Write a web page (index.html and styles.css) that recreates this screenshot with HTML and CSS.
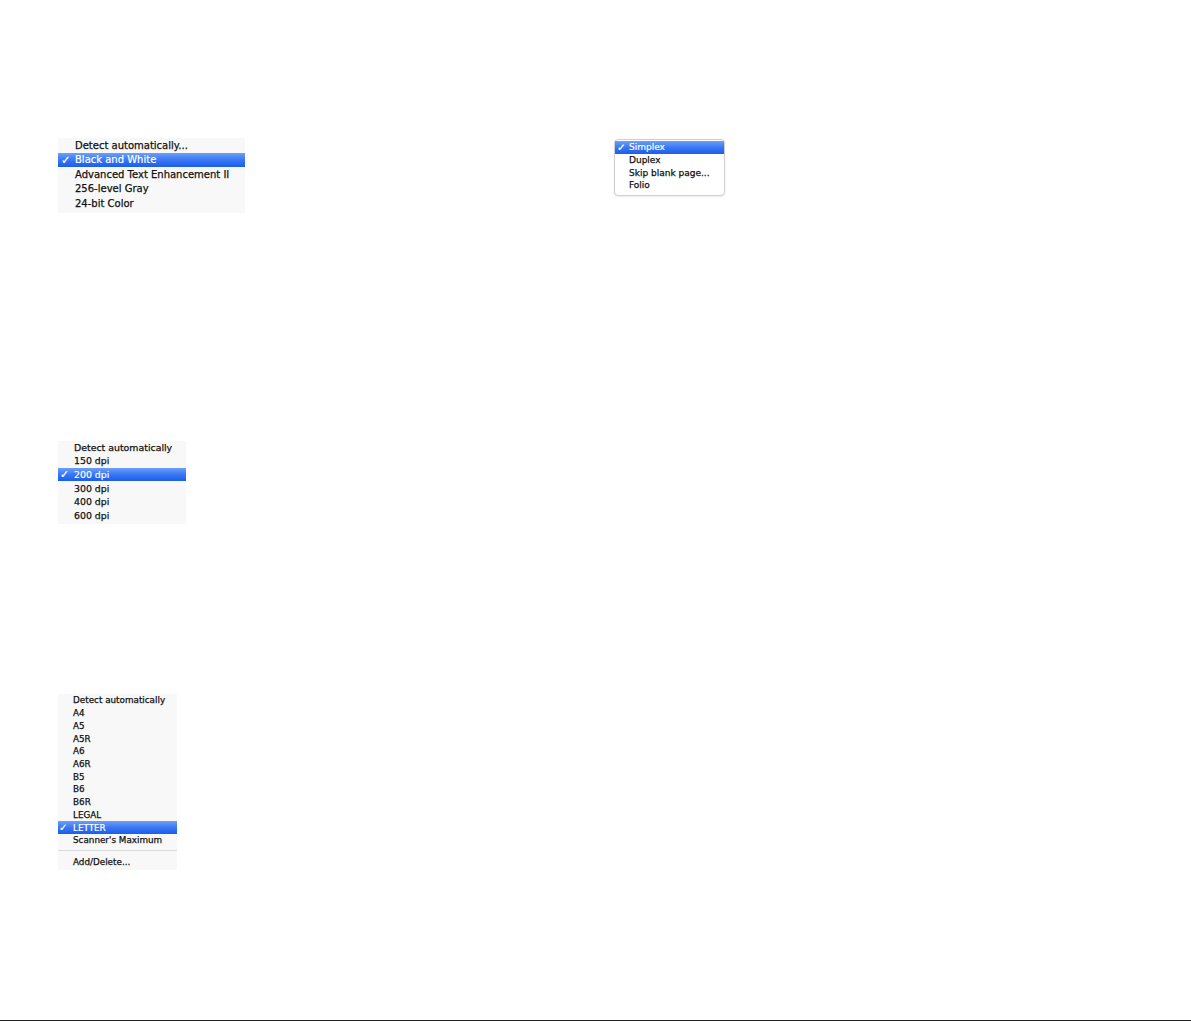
FILE: index.html
```html
<!DOCTYPE html>
<html lang="en">

<head>
    <meta charset="UTF-8">
    <meta name="viewport" content="width=device-width, initial-scale=1.0">
    <title>Scan Settings Menus</title>
    <link rel="stylesheet" href="styles.css">
</head>

<body>

    <div class="sheet">

        <!-- colour mode + side menus -->
        <div class="row row-top">
            <ul class="menu menu-mode">
                <li><span class="tick"></span>Detect automatically...</li>
                <li class="on"><span class="tick">✓</span>Black and White</li>
                <li><span class="tick"></span>Advanced Text Enhancement II</li>
                <li><span class="tick"></span>256-level Gray</li>
                <li><span class="tick"></span>24-bit Color</li>
            </ul>

            <ul class="menu menu-side">
                <li class="on"><span class="tick">✓</span>Simplex</li>
                <li><span class="tick"></span>Duplex</li>
                <li><span class="tick"></span>Skip blank page...</li>
                <li><span class="tick"></span>Folio</li>
            </ul>
        </div>

        <!-- resolution menu -->
        <div class="row row-dpi">
            <ul class="menu menu-dpi">
                <li><span class="tick"></span>Detect automatically</li>
                <li><span class="tick"></span>150 dpi</li>
                <li class="on"><span class="tick">✓</span>200 dpi</li>
                <li><span class="tick"></span>300 dpi</li>
                <li><span class="tick"></span>400 dpi</li>
                <li><span class="tick"></span>600 dpi</li>
            </ul>
        </div>

        <!-- paper size menu -->
        <div class="row row-paper">
            <ul class="menu menu-paper">
                <li><span class="tick"></span>Detect automatically</li>
                <li><span class="tick"></span>A4</li>
                <li><span class="tick"></span>A5</li>
                <li><span class="tick"></span>A5R</li>
                <li><span class="tick"></span>A6</li>
                <li><span class="tick"></span>A6R</li>
                <li><span class="tick"></span>B5</li>
                <li><span class="tick"></span>B6</li>
                <li><span class="tick"></span>B6R</li>
                <li><span class="tick"></span>LEGAL</li>
                <li class="on"><span class="tick">✓</span>LETTER</li>
                <li><span class="tick"></span>Scanner's Maximum</li>
                <li class="sep"></li>
                <li><span class="tick"></span>Add/Delete...</li>
            </ul>
        </div>

    </div>

    <div class="edge"></div>

</body>

</html>
```

FILE: styles.css
```css
body {
    margin: 0;
    padding: 0;
    height: 1021px;
    display: flex;
    flex-direction: column;
    background-color: #fff;
    font-family: "DejaVu Sans", Verdana, sans-serif;
    color: #111;
    overflow: hidden;
}

.sheet {
    padding-left: 58px;
}

.row {
    display: flex;
    align-items: flex-start;
}

.row-top {
    margin-top: 138px;
}

.row-dpi {
    margin-top: 228px;
}

.row-paper {
    margin-top: 170px;
}

/* popup menu */
.menu {
    list-style: none;
    margin: 0;
    padding: 0 0 2px 0;
    background: #f8f8f8;
}

.menu li {
    display: flex;
    align-items: center;
    height: var(--row);
    padding-left: var(--pad);
    white-space: nowrap;
    -webkit-text-stroke: 0.25px #111;
}

.menu .tick {
    display: inline-block;
    width: var(--tick);
    flex: none;
    font-size: 1.15em;
    font-weight: bold;
}

.menu li.on {
    color: #fff;
    -webkit-text-stroke: 0.2px #fff;
    background: linear-gradient(#6d9ff8, #3a77f3 50%, #1a5ded);
}

.menu-mode {
    --row: 14.5px;
    --pad: 3px;
    --tick: 14px;
    width: 187px;
    font-size: 10px;
}

.menu-side {
    --row: 12.7px;
    --pad: 2px;
    --tick: 12px;
    width: 109px;
    margin-left: 369px;
    margin-top: 1px;
    padding: 1px 0 3px 0;
    background: #fff;
    border: 1px solid #cfcfcf;
    border-radius: 4px;
    box-shadow: 0 1px 2px rgba(0, 0, 0, 0.08);
    font-size: 9px;
}

.menu-dpi {
    --row: 13.6px;
    --pad: 2px;
    --tick: 14px;
    width: 128px;
    font-size: 9.4px;
}

.menu-paper {
    --row: 12.73px;
    --pad: 1px;
    --tick: 14px;
    width: 119px;
    font-size: 8.8px;
}

.menu-paper li.sep {
    height: 8.5px;
    padding: 0;
}

.menu-paper li.sep::after {
    content: '';
    display: block;
    width: 100%;
    height: 1px;
    background: #dcdcdc;
}

.edge {
    margin-top: auto;
    height: 1px;
    background: #222;
}
```
